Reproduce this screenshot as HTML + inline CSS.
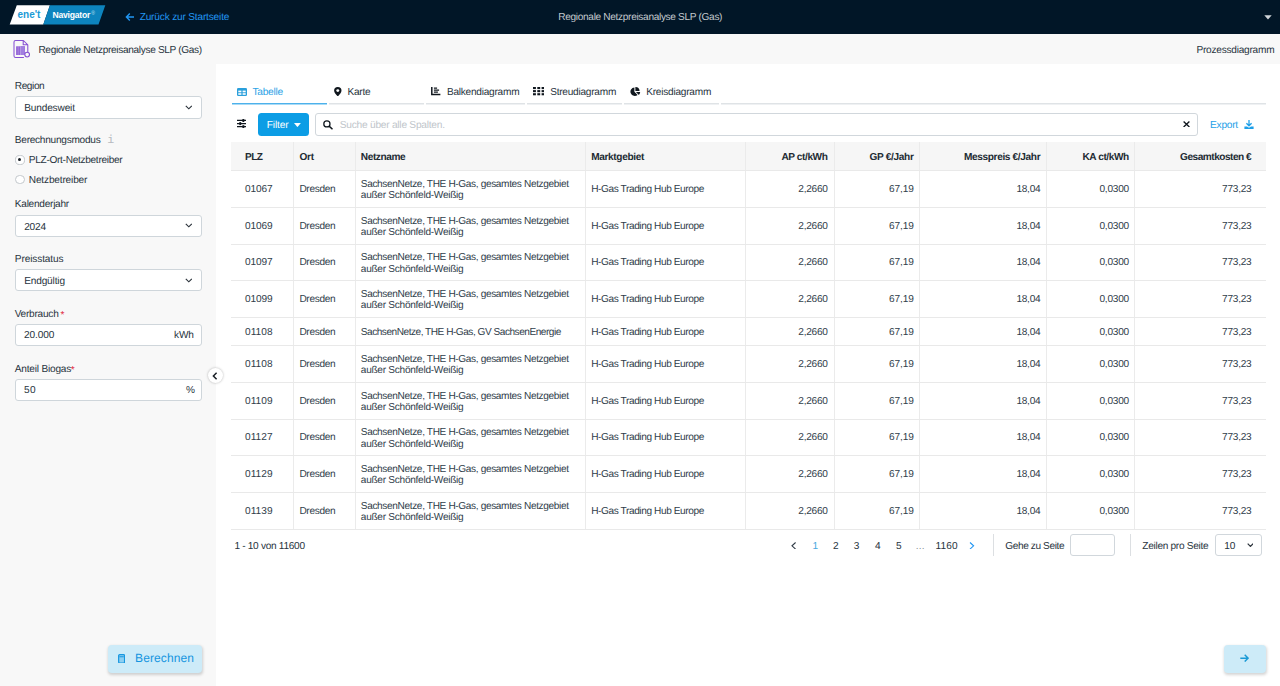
<!DOCTYPE html>
<html lang="de"><head><meta charset="utf-8"><title>Regionale Netzpreisanalyse SLP (Gas)</title>
<style>
*{box-sizing:border-box;margin:0;padding:0}
html,body{width:1280px;height:686px;overflow:hidden;background:#fff;font-family:"Liberation Sans",sans-serif;font-size:9.6px;color:#2f3a45}
.a{position:absolute}
.t{position:absolute;white-space:nowrap;line-height:1;text-rendering:geometricPrecision}
.inp{position:absolute;left:15.4px;width:186.2px;height:22.4px;border:1px solid #cfd6db;border-radius:3px;background:#fff}
.hl{position:absolute;left:231px;width:1034.8px;height:1px;background:#e9e9e9}
.vl{position:absolute;top:142.2px;width:1px;height:387.4px;background:#ebebeb}
.tab{position:absolute;top:103px;height:2px;background:linear-gradient(#dfe3e6 50%,#eff1f3 50%)}
.box{position:absolute;border:1px solid #d1d7dc;border-radius:3px;background:#fff}
.btn{position:absolute;border-radius:4px;background:#cdebf8;box-shadow:0.5px 1.5px 3px rgba(0,0,0,.17)}

</style></head><body>
<div class="a" style="left:0;top:0;width:1280px;height:33.6px;background:#011627"></div>
<div class="a" style="left:0;top:33.6px;width:1280px;height:30.4px;background:#f8f8f8"></div>
<div class="a" style="left:0;top:64px;width:216px;height:622px;background:#f8f8f8"></div>
<!-- logo -->
<svg class="a" style="left:0;top:0" width="120" height="34" viewBox="0 0 120 34">
<polygon points="16.8,5.3 49.9,5.3 43.3,24.4 9.7,24.4" fill="#fff"/>
<polygon points="49.9,5.3 105.3,5.3 98.5,24.4 43.3,24.4" fill="#0d84be"/>
<text x="17.6" y="18.3" font-family="Liberation Sans, sans-serif" font-size="10" font-weight="bold" fill="#1a9ad6" letter-spacing="-0.05">ene't</text>
<text x="52.6" y="17.9" font-family="Liberation Sans, sans-serif" font-size="8.6" font-weight="bold" fill="#fff" letter-spacing="-0.25">Navigator</text>
<text x="91.3" y="15.2" font-family="Liberation Sans, sans-serif" font-size="5" fill="#bfe0f1">®</text>
</svg>
<svg class="a" style="left:125px;top:11.5px" width="10" height="10" viewBox="0 0 10 10"><path d="M9 5H1.6M4.8 1.6L1.4 5l3.4 3.4" fill="none" stroke="#2196f3" stroke-width="1.4"/></svg>
<svg class="a" style="left:1264px;top:15px" width="8" height="5" viewBox="0 0 8 5"><path d="M0.3 0.3h7.4L4 4.4z" fill="#cfd4d8"/></svg>
<!-- doc icon -->
<svg class="a" style="left:12px;top:39px" width="19" height="20" viewBox="0 0 19 20"><path d="M3.6 1.5h7.8l4.400 4.400v8M11.900 18.500H3.600a1.600 1.600 0 0 1-1.600-1.600V3.100a1.600 1.600 0 0 1 1.600-1.600M11.200 1.700v4h4" fill="none" stroke="#8650d2" stroke-width="1.05" stroke-linejoin="round"/><rect x="4.200" y="7.300" width="8.700" height="8.700" fill="#8650d2"/><rect x="8.300" y="7.300" width="4.600" height="8.700" fill="#a27fe0"/><path d="M6.100 7.300v8.700M8.200 7.300v8.700" stroke="#f8f8f8" stroke-width=".45"/><circle cx="15.150" cy="15.600" r="2.350" fill="#f8f8f8" stroke="#8650d2" stroke-width="1.05"/></svg>
<!-- sidebar -->
<div class="inp" style="top:96.2px"></div>
<div class="inp" style="top:214.6px"></div>
<div class="inp" style="top:269.1px"></div>
<div class="inp" style="top:323.8px"></div>
<div class="inp" style="top:378.5px"></div>
<svg class="a" style="left:184.6px;top:104.8px" width="7.6" height="5" viewBox="0 0 7.6 5"><path d="M.8.8l3 3 3-3" fill="none" stroke="#2b333b" stroke-width="1.15"/></svg>
<svg class="a" style="left:184.6px;top:223.2px" width="7.6" height="5" viewBox="0 0 7.6 5"><path d="M.8.8l3 3 3-3" fill="none" stroke="#2b333b" stroke-width="1.15"/></svg>
<svg class="a" style="left:184.6px;top:277.7px" width="7.6" height="5" viewBox="0 0 7.6 5"><path d="M.8.8l3 3 3-3" fill="none" stroke="#2b333b" stroke-width="1.15"/></svg>
<div class="t" style="left:107.3px;top:134.7px;font-family:'Liberation Mono',monospace;font-size:11.6px;color:#b6babf">i</div>
<div class="a" style="left:15.4px;top:155.4px;width:9.2px;height:9.2px;border:1px solid #c3c8cc;border-radius:50%;background:#fff"><div style="position:absolute;left:2.1px;top:1.9px;width:3px;height:3px;border-radius:50%;background:#1a2026"></div></div>
<div class="a" style="left:15.4px;top:174.8px;width:9.2px;height:9.2px;border:1px solid #c3c8cc;border-radius:50%;background:#fff"></div>
<div class="a" style="left:207.6px;top:368px;width:15.2px;height:15.2px;border-radius:50%;background:#fff;box-shadow:0 0 2.5px rgba(0,0,0,.3)"><svg style="position:absolute;left:4.6px;top:4px" width="6" height="8" viewBox="0 0 6 8"><path d="M4.6 .8L1.4 4l3.2 3.2" fill="none" stroke="#1a2026" stroke-width="1.5"/></svg></div>
<div class="btn" style="left:108px;top:645px;width:93.5px;height:27.5px"><svg style="position:absolute;left:10px;top:8.6px" width="7.2" height="9.8" viewBox="0 0 7.2 9.6" preserveAspectRatio="none"><rect x=".65" y=".65" width="5.900" height="8.300" rx="1" fill="#8fcff1" stroke="#1797e0" stroke-width="1.200"/><path d="M1.400 2.700h4.400" stroke="#1797e0" stroke-width="1"/></svg></div>
<!-- tabs -->
<div class="tab" style="left:231.6px;width:95.6px;background:linear-gradient(#4db1eb 50%,#a9dbf6 50%)"></div>
<div class="tab" style="left:329px;width:94.7px"></div>
<div class="tab" style="left:426px;width:99px"></div>
<div class="tab" style="left:527px;width:95px"></div>
<div class="tab" style="left:624px;width:95.3px"></div>
<div class="tab" style="left:721.3px;width:544.5px"></div>
<svg class="a" style="left:237px;top:87.5px" width="10" height="8" viewBox="0 0 10 8"><rect x="0" y="0" width="10" height="8" rx="1.3" fill="#2a9fdb"/><rect x="1.3" y="2.6" width="3.1" height="1.7" fill="#fff"/><rect x="5.6" y="2.6" width="3.1" height="1.7" fill="#fff"/><rect x="1.3" y="5.2" width="3.1" height="1.6" fill="#fff"/><rect x="5.6" y="5.2" width="3.1" height="1.6" fill="#fff"/></svg>
<svg class="a" style="left:334px;top:87px" width="7.6" height="9.4" viewBox="0 0 7.6 9.4"><path d="M3.8 0A3.7 3.7 0 0 0 .1 3.7C.1 6 3.8 9.4 3.8 9.4S7.5 6 7.5 3.7A3.7 3.7 0 0 0 3.8 0z" fill="#10171e"/><circle cx="3.8" cy="3.6" r="1.45" fill="#fff"/></svg>
<svg class="a" style="left:431.2px;top:87.4px" width="9.4" height="8.2" viewBox="0 0 9.4 8.2"><path d="M.8 0v7.4h8.6" fill="none" stroke="#10171e" stroke-width="1.5"/><path d="M2.9 1.2h3.2M2.9 3.2h5.2M2.9 5.2h4" stroke="#10171e" stroke-width="1.3"/></svg>
<svg class="a" style="left:532.6px;top:87.2px" width="11.6" height="8.4" viewBox="0 0 11.6 8.4"><g fill="#10171e"><rect x="0" y="0" width="2.9" height="2.1"/><rect x="4.3" y="0" width="2.9" height="2.1"/><rect x="8.6" y="0" width="2.9" height="2.1"/><rect x="0" y="3.1" width="2.9" height="2.1"/><rect x="4.3" y="3.1" width="2.9" height="2.1"/><rect x="8.6" y="3.1" width="2.9" height="2.1"/><rect x="0" y="6.2" width="2.9" height="2.1"/><rect x="4.3" y="6.2" width="2.9" height="2.1"/><rect x="8.6" y="6.2" width="2.9" height="2.1"/></g></svg>
<svg class="a" style="left:630px;top:86.8px" width="10.6" height="9.4" viewBox="0 0 10.6 9.4"><path d="M4.4 .4A4.3 4.3 0 1 0 7.6 7.9L4.4 4.7z" fill="#10171e"/><path d="M5.4 0A4.2 4.2 0 0 1 9.6 4H5.4z" fill="#10171e"/><path d="M5.9 5h4.3a4.3 4.3 0 0 1-1.3 2.9z" fill="#10171e"/></svg>
<!-- toolbar -->
<svg class="a" style="left:236.6px;top:118.6px" width="9.8" height="9.2" viewBox="0 0 9.8 9.2"><path d="M0 1.500h9.800M0 4.600h9.800M0 7.700h9.800" stroke="#10171e" stroke-width="1.250"/><rect x="5.400" y="0" width="1.900" height="3" fill="#10171e"/><rect x="2.300" y="3.100" width="1.900" height="3" fill="#10171e"/><rect x="5.400" y="6.200" width="1.900" height="3" fill="#10171e"/></svg>
<div class="a" style="left:258px;top:113.4px;width:51.4px;height:22.2px;border-radius:3.500px;background:#0c9de5"><svg style="position:absolute;left:36.300px;top:9.800px" width="6.900" height="4.100" viewBox="0 0 6.4 3.6" preserveAspectRatio="none"><path d="M0 0h6.4L3.2 3.6z" fill="#fff"/></svg></div>
<div class="box" style="left:315.400px;top:113.400px;width:882.600px;height:22.600px"></div>
<svg class="a" style="left:323px;top:120.4px" width="10" height="9.4" viewBox="0 0 10 9.4"><circle cx="3.900" cy="3.900" r="3.100" fill="none" stroke="#10171e" stroke-width="1.250"/><path d="M6.100 6.100l3.400 3.100" stroke="#10171e" stroke-width="1.500"/></svg>
<svg class="a" style="left:1182.900px;top:120.800px" width="7" height="6.600" viewBox="0 0 7 6.6"><path d="M.6.600l5.800 5.400M6.400.600l-5.800 5.400" stroke="#10171e" stroke-width="1.350"/></svg>
<svg class="a" style="left:1243.9px;top:120.3px" width="10" height="9" viewBox="0 0 10 9"><path d="M5 0v5.6M2.4 3.2L5 5.8l2.600-2.6" fill="none" stroke="#1e9fe8" stroke-width="1.300"/><path d="M.4 6.400h2.600l2 1.400 2-1.400h2.600v2.600H.4z" fill="#1e9fe8"/></svg>
<!-- table -->
<div class="a" style="left:231px;top:142.2px;width:1034.8px;height:28.2px;background:#f6f6f6"></div>
<div class="vl" style="left:293.1px"></div><div class="vl" style="left:354.7px"></div><div class="vl" style="left:584.8px"></div><div class="vl" style="left:744.8px"></div><div class="vl" style="left:833.5px"></div><div class="vl" style="left:918.7px"></div><div class="vl" style="left:1046.1px"></div><div class="vl" style="left:1134px"></div>
<!-- pagination -->
<svg class="a" style="left:791.4px;top:541.8px" width="5.6" height="7.6" viewBox="0 0 5.6 7.6"><path d="M4.6 .5L1 3.800l3.600 3.300" fill="none" stroke="#2f3a45" stroke-width="1.1"/></svg>
<svg class="a" style="left:969.4px;top:541.8px" width="5.6" height="7.6" viewBox="0 0 5.6 7.6"><path d="M1 .5l3.600 3.300L1 7.100" fill="none" stroke="#2196f3" stroke-width="1.1"/></svg>
<div class="a" style="left:993px;top:534px;width:1px;height:22.4px;background:#dcdfe2"></div>
<div class="box" style="left:1070px;top:534.2px;width:45.3px;height:22px"></div>
<div class="a" style="left:1130.2px;top:534px;width:1px;height:22.4px;background:#dcdfe2"></div>
<div class="box" style="left:1214.6px;top:534.2px;width:47.9px;height:22px"></div>
<svg class="a" style="left:1246.5px;top:543px" width="6.8" height="4.4" viewBox="0 0 6.8 4.4"><path d="M.7.7l2.700 2.700L6.100.7" fill="none" stroke="#2b333b" stroke-width="1.2"/></svg>
<div class="btn" style="left:1224px;top:645px;width:42px;height:27.5px"><svg style="position:absolute;left:16.4px;top:9px" width="9" height="8.400" viewBox="0 0 9 8.4"><path d="M.3 4.200h7.600M4.700 .8l3.400 3.400-3.400 3.400" fill="none" stroke="#1a9ad6" stroke-width="1.4"/></svg></div>

<div class="hl" style="top:170.10px"></div><div class="hl" style="top:206.80px"></div><div class="hl" style="top:243.50px"></div><div class="hl" style="top:280.20px"></div><div class="hl" style="top:316.90px"></div><div class="hl" style="top:345.20px"></div><div class="hl" style="top:381.90px"></div><div class="hl" style="top:418.60px"></div><div class="hl" style="top:455.30px"></div><div class="hl" style="top:492.00px"></div><div class="hl" style="top:528.70px"></div>
<div class="t" id="t0" style="left:139.70px;top:13.05px;font-size:10.1px;color:#2196f3;letter-spacing:-0.171px;">Zurück zur Startseite</div>
<div class="t" id="t1" style="left:558.30px;top:13.05px;font-size:10.1px;color:#c3c9ce;letter-spacing:-0.321px;">Regionale Netzpreisanalyse SLP (Gas)</div>
<div class="t" id="t2" style="left:38.40px;top:45.65px;font-size:10.1px;color:#283440;letter-spacing:-0.332px;">Regionale Netzpreisanalyse SLP (Gas)</div>
<div class="t" id="t3" style="left:1196.40px;top:45.65px;font-size:10.1px;color:#283440;letter-spacing:-0.224px;">Prozessdiagramm</div>
<div class="t" id="t4" style="left:14.80px;top:82.15px;font-size:10.1px;color:#283440;letter-spacing:-0.418px;">Region</div>
<div class="t" id="t5" style="left:24.20px;top:103.95px;font-size:10.1px;color:#283440;letter-spacing:-0.153px;">Bundesweit</div>
<div class="t" id="t6" style="left:14.80px;top:136.25px;font-size:10.1px;color:#283440;letter-spacing:-0.258px;">Berechnungsmodus</div>
<div class="t" id="t7" style="left:28.80px;top:155.95px;font-size:10.1px;color:#283440;letter-spacing:-0.297px;">PLZ-Ort-Netzbetreiber</div>
<div class="t" id="t8" style="left:28.80px;top:175.75px;font-size:10.1px;color:#283440;letter-spacing:-0.165px;">Netzbetreiber</div>
<div class="t" id="t9" style="left:14.80px;top:200.25px;font-size:10.1px;color:#283440;letter-spacing:-0.258px;">Kalenderjahr</div>
<div class="t" id="t10" style="left:24.20px;top:222.65px;font-size:10.1px;color:#283440;letter-spacing:-0.187px;">2024</div>
<div class="t" id="t11" style="left:14.80px;top:255.05px;font-size:10.1px;color:#283440;letter-spacing:-0.113px;">Preisstatus</div>
<div class="t" id="t12" style="left:24.20px;top:276.75px;font-size:10.1px;color:#283440;letter-spacing:-0.161px;">Endgültig</div>
<div class="t" id="t13" style="left:14.70px;top:309.75px;font-size:10.1px;color:#283440;letter-spacing:-0.238px;">Verbrauch</div>
<div class="t" id="t14" style="left:60.50px;top:311.25px;font-size:10.1px;color:#e0243a;">*</div>
<div class="t" id="t15" style="left:24.00px;top:331.15px;font-size:10.1px;color:#283440;letter-spacing:-0.093px;">20.000</div>
<div class="t" id="t16" style="left:174.00px;top:331.15px;font-size:10.1px;color:#283440;letter-spacing:-0.139px;">kWh</div>
<div class="t" id="t17" style="left:14.70px;top:364.65px;font-size:10.1px;color:#283440;letter-spacing:-0.193px;">Anteil Biogas</div>
<div class="t" id="t18" style="left:70.80px;top:366.15px;font-size:10.1px;color:#e0243a;">*</div>
<div class="t" id="t19" style="left:24.00px;top:385.95px;font-size:10.1px;color:#283440;letter-spacing:0.475px;">50</div>
<div class="t" id="t20" style="left:185.90px;top:385.95px;font-size:10.1px;color:#283440;">%</div>
<div class="t" id="t21" style="left:135.06px;top:652.04px;font-size:12px;color:#1595e0;letter-spacing:0.104px;">Berechnen</div>
<div class="t" id="t22" style="left:252.39px;top:87.87px;font-size:10.2px;color:#2aa2e6;letter-spacing:-0.246px;">Tabelle</div>
<div class="t" id="t23" style="left:347.40px;top:87.95px;font-size:10.1px;color:#283440;letter-spacing:-0.233px;">Karte</div>
<div class="t" id="t24" style="left:446.90px;top:87.95px;font-size:10.1px;color:#283440;letter-spacing:-0.234px;">Balkendiagramm</div>
<div class="t" id="t25" style="left:550.15px;top:87.95px;font-size:10.1px;color:#283440;letter-spacing:-0.234px;">Streudiagramm</div>
<div class="t" id="t26" style="left:646.15px;top:87.95px;font-size:10.1px;color:#283440;letter-spacing:-0.222px;">Kreisdiagramm</div>
<div class="t" id="t27" style="left:266.79px;top:120.87px;font-size:10.2px;color:#ffffff;letter-spacing:-0.165px;">Filter</div>
<div class="t" id="t28" style="left:339.79px;top:120.87px;font-size:10.2px;color:#c0c5ca;letter-spacing:-0.252px;">Suche über alle Spalten.</div>
<div class="t" id="t29" style="left:1210.09px;top:121.07px;font-size:10.2px;color:#1e9fe8;letter-spacing:-0.267px;">Export</div>
<div class="t" id="t30" style="left:245.00px;top:153.05px;font-size:10.1px;color:#222b33;font-weight:bold;letter-spacing:-0.535px;">PLZ</div>
<div class="t" id="t31" style="left:299.40px;top:153.05px;font-size:10.1px;color:#222b33;font-weight:bold;letter-spacing:-0.166px;">Ort</div>
<div class="t" id="t32" style="left:360.80px;top:153.05px;font-size:10.1px;color:#222b33;font-weight:bold;letter-spacing:-0.411px;">Netzname</div>
<div class="t" id="t33" style="left:591.15px;top:153.05px;font-size:10.1px;color:#222b33;font-weight:bold;letter-spacing:-0.345px;">Marktgebiet</div>
<div class="t" id="t34" style="left:781.40px;top:153.05px;font-size:10.1px;color:#222b33;font-weight:bold;letter-spacing:-0.403px;">AP ct/kWh</div>
<div class="t" id="t35" style="left:869.40px;top:153.05px;font-size:10.1px;color:#222b33;font-weight:bold;letter-spacing:-0.306px;">GP €/Jahr</div>
<div class="t" id="t36" style="left:963.90px;top:153.05px;font-size:10.1px;color:#222b33;font-weight:bold;letter-spacing:-0.348px;">Messpreis €/Jahr</div>
<div class="t" id="t37" style="left:1082.50px;top:153.05px;font-size:10.1px;color:#222b33;font-weight:bold;letter-spacing:-0.425px;">KA ct/kWh</div>
<div class="t" id="t38" style="left:1180.10px;top:153.05px;font-size:10.1px;color:#222b33;font-weight:bold;letter-spacing:-0.490px;">Gesamtkosten €</div>
<div class="t" id="t39" style="left:245.00px;top:184.95px;font-size:10.1px;color:#303d4a;letter-spacing:-0.117px;">01067</div>
<div class="t" id="t40" style="left:299.40px;top:184.95px;font-size:10.1px;color:#303d4a;letter-spacing:-0.325px;">Dresden</div>
<div class="t" id="t41" style="left:360.80px;top:179.80px;font-size:10.1px;color:#303d4a;letter-spacing:-0.360px;">SachsenNetze, THE H-Gas, gesamtes Netzgebiet</div>
<div class="t" id="t42" style="left:360.80px;top:191.20px;font-size:10.1px;color:#303d4a;letter-spacing:-0.274px;">außer Schönfeld-Weißig</div>
<div class="t" id="t43" style="left:591.15px;top:184.95px;font-size:10.1px;color:#303d4a;letter-spacing:-0.396px;">H-Gas Trading Hub Europe</div>
<div class="t" id="t44" style="left:798.30px;top:184.95px;font-size:10.1px;color:#303d4a;letter-spacing:-0.253px;">2,2660</div>
<div class="t" id="t45" style="left:889.10px;top:184.95px;font-size:10.1px;color:#303d4a;letter-spacing:-0.114px;">67,19</div>
<div class="t" id="t46" style="left:1016.40px;top:184.95px;font-size:10.1px;color:#303d4a;letter-spacing:-0.264px;">18,04</div>
<div class="t" id="t47" style="left:1099.40px;top:184.95px;font-size:10.1px;color:#303d4a;letter-spacing:-0.213px;">0,0300</div>
<div class="t" id="t48" style="left:1222.10px;top:184.95px;font-size:10.1px;color:#303d4a;letter-spacing:-0.253px;">773,23</div>
<div class="t" id="t49" style="left:245.00px;top:221.65px;font-size:10.1px;color:#303d4a;letter-spacing:-0.117px;">01069</div>
<div class="t" id="t50" style="left:299.40px;top:221.65px;font-size:10.1px;color:#303d4a;letter-spacing:-0.325px;">Dresden</div>
<div class="t" id="t51" style="left:360.80px;top:216.50px;font-size:10.1px;color:#303d4a;letter-spacing:-0.360px;">SachsenNetze, THE H-Gas, gesamtes Netzgebiet</div>
<div class="t" id="t52" style="left:360.80px;top:227.90px;font-size:10.1px;color:#303d4a;letter-spacing:-0.274px;">außer Schönfeld-Weißig</div>
<div class="t" id="t53" style="left:591.15px;top:221.65px;font-size:10.1px;color:#303d4a;letter-spacing:-0.396px;">H-Gas Trading Hub Europe</div>
<div class="t" id="t54" style="left:798.30px;top:221.65px;font-size:10.1px;color:#303d4a;letter-spacing:-0.253px;">2,2660</div>
<div class="t" id="t55" style="left:889.10px;top:221.65px;font-size:10.1px;color:#303d4a;letter-spacing:-0.114px;">67,19</div>
<div class="t" id="t56" style="left:1016.40px;top:221.65px;font-size:10.1px;color:#303d4a;letter-spacing:-0.264px;">18,04</div>
<div class="t" id="t57" style="left:1099.40px;top:221.65px;font-size:10.1px;color:#303d4a;letter-spacing:-0.213px;">0,0300</div>
<div class="t" id="t58" style="left:1222.10px;top:221.65px;font-size:10.1px;color:#303d4a;letter-spacing:-0.253px;">773,23</div>
<div class="t" id="t59" style="left:245.00px;top:258.35px;font-size:10.1px;color:#303d4a;letter-spacing:-0.117px;">01097</div>
<div class="t" id="t60" style="left:299.40px;top:258.35px;font-size:10.1px;color:#303d4a;letter-spacing:-0.325px;">Dresden</div>
<div class="t" id="t61" style="left:360.80px;top:253.20px;font-size:10.1px;color:#303d4a;letter-spacing:-0.360px;">SachsenNetze, THE H-Gas, gesamtes Netzgebiet</div>
<div class="t" id="t62" style="left:360.80px;top:264.60px;font-size:10.1px;color:#303d4a;letter-spacing:-0.274px;">außer Schönfeld-Weißig</div>
<div class="t" id="t63" style="left:591.15px;top:258.35px;font-size:10.1px;color:#303d4a;letter-spacing:-0.396px;">H-Gas Trading Hub Europe</div>
<div class="t" id="t64" style="left:798.30px;top:258.35px;font-size:10.1px;color:#303d4a;letter-spacing:-0.253px;">2,2660</div>
<div class="t" id="t65" style="left:889.10px;top:258.35px;font-size:10.1px;color:#303d4a;letter-spacing:-0.114px;">67,19</div>
<div class="t" id="t66" style="left:1016.40px;top:258.35px;font-size:10.1px;color:#303d4a;letter-spacing:-0.264px;">18,04</div>
<div class="t" id="t67" style="left:1099.40px;top:258.35px;font-size:10.1px;color:#303d4a;letter-spacing:-0.213px;">0,0300</div>
<div class="t" id="t68" style="left:1222.10px;top:258.35px;font-size:10.1px;color:#303d4a;letter-spacing:-0.253px;">773,23</div>
<div class="t" id="t69" style="left:245.00px;top:295.05px;font-size:10.1px;color:#303d4a;letter-spacing:-0.117px;">01099</div>
<div class="t" id="t70" style="left:299.40px;top:295.05px;font-size:10.1px;color:#303d4a;letter-spacing:-0.325px;">Dresden</div>
<div class="t" id="t71" style="left:360.80px;top:289.90px;font-size:10.1px;color:#303d4a;letter-spacing:-0.360px;">SachsenNetze, THE H-Gas, gesamtes Netzgebiet</div>
<div class="t" id="t72" style="left:360.80px;top:301.30px;font-size:10.1px;color:#303d4a;letter-spacing:-0.274px;">außer Schönfeld-Weißig</div>
<div class="t" id="t73" style="left:591.15px;top:295.05px;font-size:10.1px;color:#303d4a;letter-spacing:-0.396px;">H-Gas Trading Hub Europe</div>
<div class="t" id="t74" style="left:798.30px;top:295.05px;font-size:10.1px;color:#303d4a;letter-spacing:-0.253px;">2,2660</div>
<div class="t" id="t75" style="left:889.10px;top:295.05px;font-size:10.1px;color:#303d4a;letter-spacing:-0.114px;">67,19</div>
<div class="t" id="t76" style="left:1016.40px;top:295.05px;font-size:10.1px;color:#303d4a;letter-spacing:-0.264px;">18,04</div>
<div class="t" id="t77" style="left:1099.40px;top:295.05px;font-size:10.1px;color:#303d4a;letter-spacing:-0.213px;">0,0300</div>
<div class="t" id="t78" style="left:1222.10px;top:295.05px;font-size:10.1px;color:#303d4a;letter-spacing:-0.253px;">773,23</div>
<div class="t" id="t79" style="left:245.00px;top:327.55px;font-size:10.1px;color:#303d4a;letter-spacing:0.070px;">01108</div>
<div class="t" id="t80" style="left:299.40px;top:327.55px;font-size:10.1px;color:#303d4a;letter-spacing:-0.325px;">Dresden</div>
<div class="t" id="t81" style="left:360.80px;top:327.55px;font-size:10.1px;color:#303d4a;letter-spacing:-0.483px;">SachsenNetze, THE H-Gas, GV SachsenEnergie</div>
<div class="t" id="t82" style="left:591.15px;top:327.55px;font-size:10.1px;color:#303d4a;letter-spacing:-0.396px;">H-Gas Trading Hub Europe</div>
<div class="t" id="t83" style="left:798.30px;top:327.55px;font-size:10.1px;color:#303d4a;letter-spacing:-0.253px;">2,2660</div>
<div class="t" id="t84" style="left:889.10px;top:327.55px;font-size:10.1px;color:#303d4a;letter-spacing:-0.114px;">67,19</div>
<div class="t" id="t85" style="left:1016.40px;top:327.55px;font-size:10.1px;color:#303d4a;letter-spacing:-0.264px;">18,04</div>
<div class="t" id="t86" style="left:1099.40px;top:327.55px;font-size:10.1px;color:#303d4a;letter-spacing:-0.213px;">0,0300</div>
<div class="t" id="t87" style="left:1222.10px;top:327.55px;font-size:10.1px;color:#303d4a;letter-spacing:-0.253px;">773,23</div>
<div class="t" id="t88" style="left:245.00px;top:360.05px;font-size:10.1px;color:#303d4a;letter-spacing:0.070px;">01108</div>
<div class="t" id="t89" style="left:299.40px;top:360.05px;font-size:10.1px;color:#303d4a;letter-spacing:-0.325px;">Dresden</div>
<div class="t" id="t90" style="left:360.80px;top:354.90px;font-size:10.1px;color:#303d4a;letter-spacing:-0.360px;">SachsenNetze, THE H-Gas, gesamtes Netzgebiet</div>
<div class="t" id="t91" style="left:360.80px;top:366.30px;font-size:10.1px;color:#303d4a;letter-spacing:-0.274px;">außer Schönfeld-Weißig</div>
<div class="t" id="t92" style="left:591.15px;top:360.05px;font-size:10.1px;color:#303d4a;letter-spacing:-0.396px;">H-Gas Trading Hub Europe</div>
<div class="t" id="t93" style="left:798.30px;top:360.05px;font-size:10.1px;color:#303d4a;letter-spacing:-0.253px;">2,2660</div>
<div class="t" id="t94" style="left:889.10px;top:360.05px;font-size:10.1px;color:#303d4a;letter-spacing:-0.114px;">67,19</div>
<div class="t" id="t95" style="left:1016.40px;top:360.05px;font-size:10.1px;color:#303d4a;letter-spacing:-0.264px;">18,04</div>
<div class="t" id="t96" style="left:1099.40px;top:360.05px;font-size:10.1px;color:#303d4a;letter-spacing:-0.213px;">0,0300</div>
<div class="t" id="t97" style="left:1222.10px;top:360.05px;font-size:10.1px;color:#303d4a;letter-spacing:-0.253px;">773,23</div>
<div class="t" id="t98" style="left:245.00px;top:396.75px;font-size:10.1px;color:#303d4a;letter-spacing:0.070px;">01109</div>
<div class="t" id="t99" style="left:299.40px;top:396.75px;font-size:10.1px;color:#303d4a;letter-spacing:-0.325px;">Dresden</div>
<div class="t" id="t100" style="left:360.80px;top:391.60px;font-size:10.1px;color:#303d4a;letter-spacing:-0.360px;">SachsenNetze, THE H-Gas, gesamtes Netzgebiet</div>
<div class="t" id="t101" style="left:360.80px;top:403.00px;font-size:10.1px;color:#303d4a;letter-spacing:-0.274px;">außer Schönfeld-Weißig</div>
<div class="t" id="t102" style="left:591.15px;top:396.75px;font-size:10.1px;color:#303d4a;letter-spacing:-0.396px;">H-Gas Trading Hub Europe</div>
<div class="t" id="t103" style="left:798.30px;top:396.75px;font-size:10.1px;color:#303d4a;letter-spacing:-0.253px;">2,2660</div>
<div class="t" id="t104" style="left:889.10px;top:396.75px;font-size:10.1px;color:#303d4a;letter-spacing:-0.114px;">67,19</div>
<div class="t" id="t105" style="left:1016.40px;top:396.75px;font-size:10.1px;color:#303d4a;letter-spacing:-0.264px;">18,04</div>
<div class="t" id="t106" style="left:1099.40px;top:396.75px;font-size:10.1px;color:#303d4a;letter-spacing:-0.213px;">0,0300</div>
<div class="t" id="t107" style="left:1222.10px;top:396.75px;font-size:10.1px;color:#303d4a;letter-spacing:-0.253px;">773,23</div>
<div class="t" id="t108" style="left:245.00px;top:433.45px;font-size:10.1px;color:#303d4a;letter-spacing:0.070px;">01127</div>
<div class="t" id="t109" style="left:299.40px;top:433.45px;font-size:10.1px;color:#303d4a;letter-spacing:-0.325px;">Dresden</div>
<div class="t" id="t110" style="left:360.80px;top:428.30px;font-size:10.1px;color:#303d4a;letter-spacing:-0.360px;">SachsenNetze, THE H-Gas, gesamtes Netzgebiet</div>
<div class="t" id="t111" style="left:360.80px;top:439.70px;font-size:10.1px;color:#303d4a;letter-spacing:-0.274px;">außer Schönfeld-Weißig</div>
<div class="t" id="t112" style="left:591.15px;top:433.45px;font-size:10.1px;color:#303d4a;letter-spacing:-0.396px;">H-Gas Trading Hub Europe</div>
<div class="t" id="t113" style="left:798.30px;top:433.45px;font-size:10.1px;color:#303d4a;letter-spacing:-0.253px;">2,2660</div>
<div class="t" id="t114" style="left:889.10px;top:433.45px;font-size:10.1px;color:#303d4a;letter-spacing:-0.114px;">67,19</div>
<div class="t" id="t115" style="left:1016.40px;top:433.45px;font-size:10.1px;color:#303d4a;letter-spacing:-0.264px;">18,04</div>
<div class="t" id="t116" style="left:1099.40px;top:433.45px;font-size:10.1px;color:#303d4a;letter-spacing:-0.213px;">0,0300</div>
<div class="t" id="t117" style="left:1222.10px;top:433.45px;font-size:10.1px;color:#303d4a;letter-spacing:-0.253px;">773,23</div>
<div class="t" id="t118" style="left:245.00px;top:470.15px;font-size:10.1px;color:#303d4a;letter-spacing:0.070px;">01129</div>
<div class="t" id="t119" style="left:299.40px;top:470.15px;font-size:10.1px;color:#303d4a;letter-spacing:-0.325px;">Dresden</div>
<div class="t" id="t120" style="left:360.80px;top:465.00px;font-size:10.1px;color:#303d4a;letter-spacing:-0.360px;">SachsenNetze, THE H-Gas, gesamtes Netzgebiet</div>
<div class="t" id="t121" style="left:360.80px;top:476.40px;font-size:10.1px;color:#303d4a;letter-spacing:-0.274px;">außer Schönfeld-Weißig</div>
<div class="t" id="t122" style="left:591.15px;top:470.15px;font-size:10.1px;color:#303d4a;letter-spacing:-0.396px;">H-Gas Trading Hub Europe</div>
<div class="t" id="t123" style="left:798.30px;top:470.15px;font-size:10.1px;color:#303d4a;letter-spacing:-0.253px;">2,2660</div>
<div class="t" id="t124" style="left:889.10px;top:470.15px;font-size:10.1px;color:#303d4a;letter-spacing:-0.114px;">67,19</div>
<div class="t" id="t125" style="left:1016.40px;top:470.15px;font-size:10.1px;color:#303d4a;letter-spacing:-0.264px;">18,04</div>
<div class="t" id="t126" style="left:1099.40px;top:470.15px;font-size:10.1px;color:#303d4a;letter-spacing:-0.213px;">0,0300</div>
<div class="t" id="t127" style="left:1222.10px;top:470.15px;font-size:10.1px;color:#303d4a;letter-spacing:-0.253px;">773,23</div>
<div class="t" id="t128" style="left:245.00px;top:506.85px;font-size:10.1px;color:#303d4a;letter-spacing:0.070px;">01139</div>
<div class="t" id="t129" style="left:299.40px;top:506.85px;font-size:10.1px;color:#303d4a;letter-spacing:-0.325px;">Dresden</div>
<div class="t" id="t130" style="left:360.80px;top:501.70px;font-size:10.1px;color:#303d4a;letter-spacing:-0.360px;">SachsenNetze, THE H-Gas, gesamtes Netzgebiet</div>
<div class="t" id="t131" style="left:360.80px;top:513.10px;font-size:10.1px;color:#303d4a;letter-spacing:-0.274px;">außer Schönfeld-Weißig</div>
<div class="t" id="t132" style="left:591.15px;top:506.85px;font-size:10.1px;color:#303d4a;letter-spacing:-0.396px;">H-Gas Trading Hub Europe</div>
<div class="t" id="t133" style="left:798.30px;top:506.85px;font-size:10.1px;color:#303d4a;letter-spacing:-0.253px;">2,2660</div>
<div class="t" id="t134" style="left:889.10px;top:506.85px;font-size:10.1px;color:#303d4a;letter-spacing:-0.114px;">67,19</div>
<div class="t" id="t135" style="left:1016.40px;top:506.85px;font-size:10.1px;color:#303d4a;letter-spacing:-0.264px;">18,04</div>
<div class="t" id="t136" style="left:1099.40px;top:506.85px;font-size:10.1px;color:#303d4a;letter-spacing:-0.213px;">0,0300</div>
<div class="t" id="t137" style="left:1222.10px;top:506.85px;font-size:10.1px;color:#303d4a;letter-spacing:-0.253px;">773,23</div>
<div class="t" id="t138" style="left:234.40px;top:541.85px;font-size:10.1px;color:#283440;letter-spacing:-0.294px;">1 - 10 von 11600</div>
<div class="t" id="t139" style="left:812.40px;top:541.85px;font-size:10.1px;color:#4aa8e0;">1</div>
<div class="t" id="t140" style="left:833.00px;top:541.85px;font-size:10.1px;color:#283440;">2</div>
<div class="t" id="t141" style="left:853.80px;top:541.85px;font-size:10.1px;color:#283440;">3</div>
<div class="t" id="t142" style="left:875.00px;top:541.85px;font-size:10.1px;color:#283440;">4</div>
<div class="t" id="t143" style="left:896.00px;top:541.85px;font-size:10.1px;color:#283440;">5</div>
<div class="t" id="t144" style="left:915.80px;top:541.85px;font-size:10.1px;color:#8a9299;letter-spacing:0.194px;">...</div>
<div class="t" id="t145" style="left:935.40px;top:541.85px;font-size:10.1px;color:#283440;letter-spacing:0.163px;">1160</div>
<div class="t" id="t146" style="left:1005.30px;top:541.85px;font-size:10.1px;color:#283440;letter-spacing:-0.397px;">Gehe zu Seite</div>
<div class="t" id="t147" style="left:1142.30px;top:541.85px;font-size:10.1px;color:#283440;letter-spacing:-0.293px;">Zeilen pro Seite</div>
<div class="t" id="t148" style="left:1224.30px;top:541.85px;font-size:10.1px;color:#283440;letter-spacing:-0.225px;">10</div>
</body></html>
